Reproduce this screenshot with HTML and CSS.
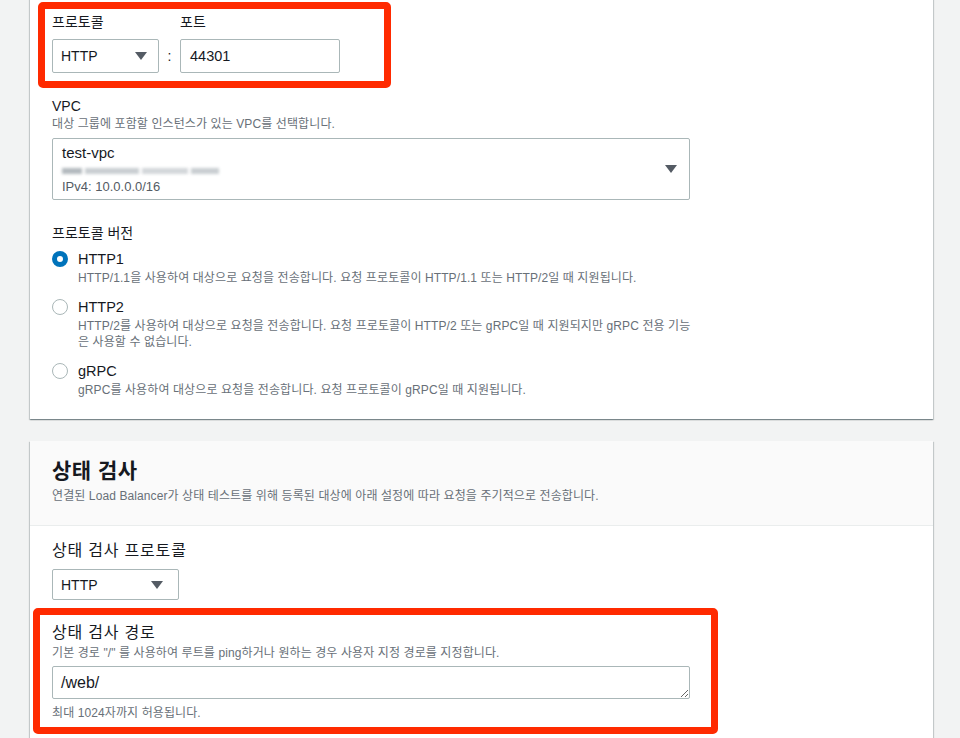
FILE: index.html
```html
<!DOCTYPE html>
<html>
    <head>
        <meta charset="utf-8">
        <title>대상 그룹 생성</title>
        <link rel="stylesheet" href="styles.css">
    </head>

    <body>
        <div class="page">

            <section class="card card-first">

                <div class="highlight hl-protocol">
                    <div class="proto-grid">
                        <span class="label">프로토콜</span>
                        <span></span>
                        <span class="label">포트</span>

                        <div class="select sel-proto">
                            <span>HTTP</span>
                            <svg class="caret" width="12" height="8" viewBox="0 0 12 8"><path d="M0 0 L12 0 L6 8 Z"/></svg>
                        </div>
                        <span class="colon">:</span>
                        <div class="input port">44301</div>
                    </div>
                </div>

                <div class="field vpc-field">
                    <div class="label">VPC</div>
                    <div class="desc">대상 그룹에 포함할 인스턴스가 있는 VPC를 선택합니다.</div>
                    <div class="select sel-vpc">
                        <div class="vpc-lines">
                            <div class="vpc-name">test-vpc</div>
                            <div class="blur-line">
                                <span class="b1"></span><span class="b2"></span><span class="b3"></span><span class="b4"></span>
                            </div>
                            <div class="vpc-cidr">IPv4: 10.0.0.0/16</div>
                        </div>
                        <svg class="caret" width="12" height="8" viewBox="0 0 12 8"><path d="M0 0 L12 0 L6 8 Z"/></svg>
                    </div>
                </div>

                <div class="field version-field">
                    <div class="label">프로토콜 버전</div>
                    <div class="radio-group">
                        <div class="radio-row">
                            <span class="radio checked"></span>
                            <div>
                                <div class="radio-label">HTTP1</div>
                                <div class="desc">HTTP/1.1을 사용하여 대상으로 요청을 전송합니다. 요청 프로토콜이 HTTP/1.1 또는 HTTP/2일 때 지원됩니다.</div>
                            </div>
                        </div>
                        <div class="radio-row">
                            <span class="radio"></span>
                            <div>
                                <div class="radio-label">HTTP2</div>
                                <div class="desc">HTTP/2를 사용하여 대상으로 요청을 전송합니다. 요청 프로토콜이 HTTP/2 또는 gRPC일 때 지원되지만 gRPC 전용 기능은 사용할 수 없습니다.</div>
                            </div>
                        </div>
                        <div class="radio-row">
                            <span class="radio"></span>
                            <div>
                                <div class="radio-label">gRPC</div>
                                <div class="desc">gRPC를 사용하여 대상으로 요청을 전송합니다. 요청 프로토콜이 gRPC일 때 지원됩니다.</div>
                            </div>
                        </div>
                    </div>
                </div>

            </section>

            <section class="card card-health">
                <div class="card-header">
                    <h2>상태 검사</h2>
                    <p class="desc">연결된 Load Balancer가 상태 테스트를 위해 등록된 대상에 아래 설정에 따라 요청을 주기적으로 전송합니다.</p>
                </div>

                <div class="card-body">
                    <div class="field">
                        <div class="label">상태 검사 프로토콜</div>
                        <div class="select sel-health">
                            <span>HTTP</span>
                            <svg class="caret" width="12" height="8" viewBox="0 0 12 8"><path d="M0 0 L12 0 L6 8 Z"/></svg>
                        </div>
                    </div>

                    <div class="highlight hl-path">
                        <div class="label">상태 검사 경로</div>
                        <div class="desc path-desc">기본 경로 "/" 를 사용하여 루트를 ping하거나 원하는 경우 사용자 지정 경로를 지정합니다.</div>
                        <textarea class="path-input">/web/</textarea>
                        <div class="desc hint">최대 1024자까지 허용됩니다.</div>
                    </div>
                </div>
            </section>

        </div>
    </body>
</html>
```

FILE: styles.css
```css
body {
    margin: 0;
    background-color: #f2f3f3;
    font-family: "Liberation Sans", "Noto Sans CJK KR", sans-serif;
    color: #16191f;
}

.page {
    padding: 0 27px 0 30px;
    margin-top: -10px;
}

.card {
    background-color: #ffffff;
    box-shadow: 0 1px 1px 0 rgba(0, 28, 36, 0.3), 1px 1px 1px 0 rgba(0, 28, 36, 0.15), -1px 1px 1px 0 rgba(0, 28, 36, 0.15);
}

.card-first {
    padding: 12px 22px 21px 22px;
}

.card-health {
    margin-top: 22px;
}

.label {
    font-size: 14px;
    line-height: 20px;
    color: #16191f;
}

.desc {
    font-size: 12px;
    line-height: 16px;
    letter-spacing: 0.1px;
    color: #687078;
    margin: 0;
}

/* red marks drawn over the screenshot */
.highlight {
    border: 7px solid #ff2a00;
    border-radius: 5px;
    box-sizing: border-box;
}

.hl-protocol {
    width: fit-content;
    margin-left: -14px;
    padding: 3px 44px 8px 7px;
}

.proto-grid {
    display: grid;
    grid-template-columns: 107px 21px 160px;
    row-gap: 7px;
}

.select {
    display: flex;
    align-items: center;
    justify-content: space-between;
    box-sizing: border-box;
    border: 1px solid #aab7b8;
    border-radius: 2px;
    background-color: #ffffff;
    font-size: 14px;
    color: #16191f;
}

.caret {
    fill: #545b64;
}

.sel-proto {
    height: 34px;
    padding: 0 11px 0 8px;
}

.colon {
    font-size: 14px;
    line-height: 34px;
    text-align: center;
    color: #16191f;
}

.input {
    box-sizing: border-box;
    height: 34px;
    border: 1px solid #aab7b8;
    border-radius: 2px;
    padding: 0 9px;
    font-size: 14.5px;
    line-height: 32px;
}

.vpc-field {
    margin-top: 8px;
}

.sel-vpc {
    width: 638px;
    margin-top: 6px;
    padding: 4px 12px 4px 9px;
}

.vpc-name {
    font-size: 15px;
    line-height: 20px;
}

.vpc-cidr {
    font-size: 13px;
    line-height: 16px;
    color: #545b64;
}

.blur-line {
    display: flex;
    align-items: center;
    height: 16px;
    gap: 3px;
    filter: blur(1.6px);
}

.blur-line span {
    height: 6px;
    background-color: #c9ced2;
}

.blur-line .b1 { width: 20px; background-color: #b3b9be; }
.blur-line .b2 { width: 54px; }
.blur-line .b3 { width: 46px; background-color: #d3d7da; }
.blur-line .b4 { width: 28px; }

.version-field {
    margin-top: 23px;
}

.radio-group {
    margin-top: 6px;
    display: flex;
    flex-direction: column;
    gap: 11px;
    width: 645px;
}

.radio-row {
    display: grid;
    grid-template-columns: 16px 1fr;
    column-gap: 10px;
}

.radio {
    box-sizing: border-box;
    width: 16px;
    height: 16px;
    margin-top: 2px;
    border-radius: 50%;
    border: 1.5px solid #aab7b8;
    background-color: #ffffff;
}

.radio.checked {
    border: 5px solid #0073bb;
}

.radio-label {
    font-size: 14.5px;
    line-height: 21px;
    color: #16191f;
}

.card-header {
    background-color: #fafafa;
    border-bottom: 1px solid #eaeded;
    padding: 18px 22px 21px 22px;
}

.card-header h2 {
    margin: 0;
    font-size: 21px;
    line-height: 24px;
    font-weight: bold;
    letter-spacing: 0.5px;
}

.card-header .desc {
    margin-top: 5px;
}

.card-body {
    padding: 15px 22px 20px 22px;
}

.card-body .label {
    font-size: 16px;
    letter-spacing: 0.8px;
}

.sel-health {
    width: 127px;
    height: 31px;
    margin-top: 8px;
    padding: 0 15px 0 8px;
}

.hl-path {
    width: 685px;
    margin-top: 8px;
    margin-left: -19px;
    padding: 8px 21px 6px 12px;
}

.path-desc {
    margin-top: 2px;
}

.path-input {
    display: block;
    box-sizing: border-box;
    width: 638px;
    height: 33px;
    margin-top: 5px;
    padding: 5px 8px;
    border: 1px solid #aab7b8;
    border-radius: 2px;
    font-family: "Liberation Sans", "Noto Sans CJK KR", sans-serif;
    font-size: 16px;
    line-height: 21px;
    color: #16191f;
}

.hint {
    margin-top: 6px;
}
```
